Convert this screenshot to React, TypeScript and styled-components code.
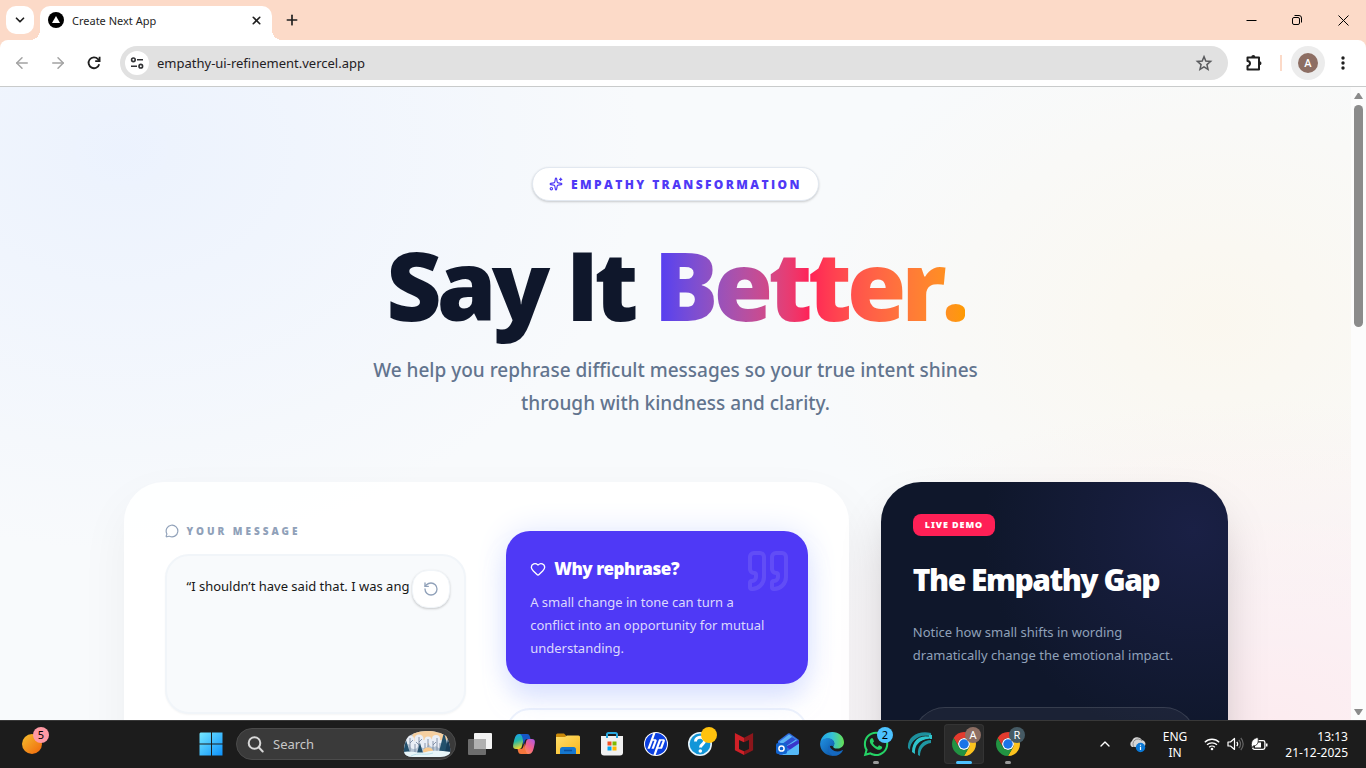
import React from "react";
import styled, { createGlobalStyle } from "styled-components";
import {
  ArrowLeft,
  ArrowRight,
  ChevronDown,
  ChevronUp,
  Heart,
  MessageCircle,
  Plus,
  Quote,
  RotateCcw,
  Sparkles,
  X,
} from "lucide-react";
import { FaWhatsapp } from "react-icons/fa";
import { SiHp } from "react-icons/si";

const indigo = "#4f39f6";
const slate = "#0f172b";
const rose = "#ff2056";
const display = `"Open Sans", "Noto Sans", sans-serif`;

const GlobalStyle = createGlobalStyle`
  *, *::before, *::after { box-sizing: border-box; }
  body { margin: 0; overflow: hidden; }
  body, button, input, textarea { font-family: "Noto Sans", "Open Sans", sans-serif; }
  button { border: 0; padding: 0; background: none; color: inherit; cursor: pointer; }
  h1, h2, h3, p { margin: 0; }
  svg { display: block; flex: none; }
`;

const Screen = styled.div`
  display: flex;
  flex-direction: column;
  height: 100vh;
  background: #fcdac8;
`;

/* ---------- browser window ---------- */

const TitleBar = styled.header`
  display: flex;
  align-items: flex-end;
  flex: none;
  height: 40px;
  padding-left: 6px;
  color: #1f1f1f;
`;

const TabSearch = styled.button`
  display: grid;
  place-items: center;
  align-self: center;
  width: 28px;
  height: 28px;
  border-radius: 10px;
  background: #fff;
`;

const Tab = styled.div`
  display: flex;
  align-items: center;
  gap: 8px;
  position: relative;
  width: 232px;
  height: 34px;
  margin-left: 6px;
  padding: 0 8px 6px;
  border-radius: 10px 10px 0 0;
  background: #fff;
  font-size: 11px;
  &::before, &::after {
    content: "";
    position: absolute;
    bottom: 0;
    width: 10px;
    height: 10px;
  }
  &::before {
    right: 100%;
    background: radial-gradient(circle at 0 0, transparent 10px, #fff 10px);
  }
  &::after {
    left: 100%;
    background: radial-gradient(circle at 100% 0, transparent 10px, #fff 10px);
  }
`;

const TabTitle = styled.span`
  flex: 1;
  white-space: nowrap;
`;

const IconButton = styled.button<{ $w?: number; $h?: number; $dim?: boolean }>`
  display: grid;
  place-items: center;
  flex: none;
  width: ${(p) => p.$w ?? 28}px;
  height: ${(p) => p.$h ?? 28}px;
  color: ${(p) => (p.$dim ? "#a3a3a3" : "#1f1f1f")};
`;

const NewTab = styled(IconButton)`
  align-self: center;
  margin-left: 6px;
`;

const WindowControls = styled.div`
  display: flex;
  height: 40px;
  margin-left: auto;
`;

const Toolbar = styled.div`
  display: flex;
  align-items: center;
  flex: none;
  height: 47px;
  padding: 0 5px 0 8px;
  border-bottom: 1px solid #c9cbcb;
  border-radius: 8px 8px 0 0;
  background: #fff;
`;

const NavButtons = styled.div`
  display: flex;
  gap: 8px;
  margin-right: 12px;
`;

const AddressBar = styled.label`
  display: flex;
  align-items: center;
  flex: 1;
  min-width: 0;
  height: 34px;
  padding: 0 10px 0 5px;
  border-radius: 17px;
  background: #e1e1e1;
`;

const SiteInfo = styled.span`
  display: grid;
  place-items: center;
  width: 24px;
  height: 24px;
  border-radius: 50%;
  background: #fff;
`;

const AddressInput = styled.input`
  flex: 1;
  min-width: 0;
  padding: 0 8px;
  border: 0;
  outline: 0;
  background: none;
  color: #1f2024;
  font-size: 13px;
`;

const ToolbarDivider = styled.span`
  width: 2px;
  height: 16px;
  margin-right: 9px;
  background: #fcdac8;
`;

const Profile = styled.button`
  display: grid;
  place-items: center;
  width: 34px;
  height: 34px;
  border-radius: 50%;
  background: #ececec;
`;

const Avatar = styled.span`
  display: grid;
  place-items: center;
  width: 20px;
  height: 20px;
  border-radius: 50%;
  background: #8d6e63;
  color: #fff;
  font: 500 11px Roboto, sans-serif;
`;

/* ---------- page ---------- */

const Viewport = styled.div`
  display: flex;
  flex: 1;
  min-height: 0;
  overflow: hidden;
`;

const Page = styled.main`
  flex: 1;
  min-width: 0;
  overflow: hidden;
  padding: 80px 24px 0;
  background:
    radial-gradient(ellipse 520px 400px at 9% 10%, rgba(226, 236, 255, 0.55), rgba(226, 236, 255, 0) 100%),
    radial-gradient(ellipse 560px 320px at 94% 100%, rgba(255, 228, 233, 0.65), rgba(255, 228, 233, 0) 100%),
    radial-gradient(ellipse 420px 320px at 90% 37%, rgba(252, 246, 232, 0.65), rgba(252, 246, 232, 0) 100%),
    #f8fafc;
`;

const ScrollBar = styled.div`
  display: flex;
  flex-direction: column;
  align-items: center;
  justify-content: space-between;
  flex: none;
  width: 15px;
  padding: 5px 0 4px;
  background: #fcfcfc;
  color: #8b8b8b;
`;

const ScrollThumb = styled.span`
  width: 9px;
  height: 222px;
  margin: 5px 0 auto;
  border-radius: 5px;
  background: #8b8b8b;
`;

const Container = styled.div`
  max-width: 1104px;
  margin: 0 auto;
`;

const Hero = styled.section`
  display: flex;
  flex-direction: column;
  align-items: center;
  margin-bottom: 62px;
  text-align: center;
`;

const Pill = styled.div`
  display: flex;
  align-items: center;
  gap: 8px;
  height: 34px;
  padding: 0 16px;
  border: 1px solid #e2e8f0;
  border-radius: 18px;
  background: #fff;
  box-shadow: 0 1px 3px rgba(0, 0, 0, 0.1), 0 1px 2px rgba(0, 0, 0, 0.1);
  color: ${indigo};
  font-family: ${display};
  font-size: 12px;
  font-weight: 800;
  letter-spacing: 0.2em;
  white-space: nowrap;
`;

const Headline = styled.h1`
  margin: 35px 0 22px;
  color: ${slate};
  font-family: ${display};
  font-size: 96px;
  font-weight: 800;
  line-height: 96px;
  letter-spacing: -0.05em;
  white-space: nowrap;
`;

const Gradient = styled.span`
  display: inline-block;
  background: linear-gradient(to right in oklab, ${indigo}, ${rose}, #fe9a00);
  background-clip: text;
  -webkit-background-clip: text;
  color: transparent;
`;

const Lead = styled.p`
  max-width: 640px;
  color: #62748e;
  font-size: 19px;
  font-weight: 500;
  line-height: 33px;
`;

const Columns = styled.div`
  display: grid;
  grid-template-columns: repeat(12, minmax(0, 1fr));
  gap: 32px;
  align-items: start;
`;

const Composer = styled.section`
  display: grid;
  grid-template-columns: 1fr 1fr;
  gap: 40px;
  grid-column: span 8;
  min-height: 480px;
  padding: 41px;
  border-radius: 40px;
  background: rgba(255, 255, 255, 0.88);
  box-shadow: 0 20px 50px rgba(0, 0, 0, 0.05);
`;

const FieldLabel = styled.label`
  display: flex;
  align-items: center;
  gap: 8px;
  height: 16px;
  margin-bottom: 15px;
  color: #90a1b9;
  font-size: 10px;
  font-weight: 900;
  letter-spacing: 0.3em;
  white-space: nowrap;
`;

const MessageBox = styled.div`
  position: relative;
  display: flex;
`;

const Message = styled.textarea`
  width: 100%;
  height: 160px;
  padding: 20px;
  border: 2px solid #f1f5f9;
  border-radius: 24px;
  outline: 0;
  background: #f8fafc;
  box-shadow: 0 1px 2px rgba(0, 0, 0, 0.04);
  color: #171717;
  font-size: 13px;
  line-height: 20px;
  resize: none;
`;

const ResetButton = styled.button`
  position: absolute;
  top: 16px;
  right: 16px;
  display: grid;
  place-items: center;
  width: 38px;
  height: 38px;
  border: 1px solid #f1f5f9;
  border-radius: 16px;
  background: #fff;
  box-shadow: 0 1px 3px rgba(0, 0, 0, 0.1), 0 1px 2px rgba(0, 0, 0, 0.1);
  color: #90a1b9;
`;

const SideNotes = styled.div`
  display: flex;
  flex-direction: column;
  gap: 24px;
  padding-top: 8px;
`;

const WhyCard = styled.article`
  position: relative;
  padding: 24px;
  border-radius: 24px;
  background: ${indigo};
  box-shadow: 0 20px 25px -5px #c6d2ff80, 0 0 32px #e0e7ff;
  color: #fff;
`;

const WhyTitle = styled.h3`
  display: flex;
  align-items: center;
  gap: 8px;
  margin-bottom: 8px;
  font-size: 17px;
  font-weight: 900;
  line-height: 28px;
  letter-spacing: -0.025em;
`;

const WhyText = styled.p`
  max-width: 244px;
  color: #dcd8fd;
  font-size: 13px;
  line-height: 23px;
`;

const QuoteMark = styled(Quote)`
  position: absolute;
  top: 16px;
  right: 16px;
  opacity: 0.1;
`;

const ExampleCard = styled.div`
  height: 160px;
  border: 2px solid #edf2fc;
  border-radius: 24px;
  background: rgba(255, 255, 255, 0.5);
`;

const GapCard = styled.aside`
  grid-column: span 4;
  min-height: 480px;
  padding: 32px;
  border-radius: 40px;
  background: radial-gradient(circle 210px at 90% 48px, #1a2045, ${slate}) ${slate};
  box-shadow: 0 25px 50px -12px rgba(0, 0, 0, 0.25);
  color: #fff;
`;

const LiveBadge = styled.span`
  display: inline-block;
  padding: 0 12px;
  border-radius: 8px;
  background: ${rose};
  font-size: 9px;
  font-weight: 900;
  line-height: 22px;
  letter-spacing: 0.1em;
  vertical-align: top;
`;

const GapTitle = styled.h2`
  margin: 24px 0 21px;
  font-size: 30px;
  font-weight: 900;
  line-height: 40px;
  letter-spacing: -0.05em;
  white-space: nowrap;
`;

const GapText = styled.p`
  margin-bottom: 40px;
  color: #90a1b9;
  font-size: 13px;
  line-height: 23px;
`;

const GapExample = styled.div`
  height: 160px;
  border: 1px solid rgba(255, 255, 255, 0.12);
  border-radius: 32px;
  background: rgba(255, 255, 255, 0.05);
`;

/* ---------- taskbar ---------- */

const TaskBar = styled.footer`
  display: flex;
  align-items: center;
  flex: none;
  height: 48px;
  background: #1c1c1c;
  box-shadow: inset 0 1px #383838;
  color: #fff;
`;

const WidgetArea = styled.div`
  flex: 0 0 189px;
  padding-left: 10px;
`;

const AppButton = styled.button<{ $active?: boolean; $running?: boolean }>`
  position: relative;
  display: grid;
  place-items: center;
  flex: none;
  width: 40px;
  height: 40px;
  margin: 0 2px;
  border-radius: 4px;
  background: ${(p) => (p.$active ? "#2a2a2a" : "transparent")};
  box-shadow: ${(p) => (p.$active ? "inset 0 0 0 1px #343434" : "none")};
  &::after {
    content: "";
    display: ${(p) => (p.$active || p.$running ? "block" : "none")};
    position: absolute;
    bottom: 0;
    width: ${(p) => (p.$active ? 16 : 6)}px;
    height: 3px;
    border-radius: 2px;
    background: ${(p) => (p.$active ? "#4cc2ff" : "#9a9a9a")};
  }
`;

const Badge = styled.span<{ $bg: string; $fg?: string }>`
  position: absolute;
  top: 3px;
  right: 3px;
  display: grid;
  place-items: center;
  width: 16px;
  height: 16px;
  border-radius: 50%;
  background: ${(p) => p.$bg};
  color: ${(p) => p.$fg ?? "#fff"};
  font-size: 11px;
  line-height: 16px;
`;

const SearchBox = styled.label`
  display: flex;
  align-items: center;
  gap: 9px;
  flex: none;
  width: 220px;
  height: 32px;
  margin: 0 2px 0 3px;
  padding: 0 4px 0 10px;
  border: 1px solid #4b4b4b;
  border-radius: 16px;
  background: #3a3a3a;
`;

const SearchInput = styled.input`
  flex: 1;
  min-width: 0;
  padding: 0;
  border: 0;
  outline: 0;
  background: none;
  color: #fff;
  font-size: 13px;
  &::placeholder { color: #c8c8c8; opacity: 1; }
`;

const Tray = styled.div`
  display: flex;
  align-items: center;
  margin-left: auto;
  padding-right: 18px;
  font-size: 12px;
  line-height: 16px;
`;

const TrayIcons = styled.div`
  display: flex;
  align-items: center;
  gap: 7px;
  margin: 0 17px 0 17px;
`;

const TrayApps = styled.div`
  display: flex;
  align-items: center;
  gap: 15px;
  margin-right: 17px;
`;

const TrayText = styled.div<{ $align: "center" | "right" }>`
  padding-top: 1px;
  text-align: ${(p) => p.$align};
  white-space: nowrap;
`;

/* ---------- drawings ---------- */

const ReloadIcon = () => (
  <svg width="16" height="16" viewBox="0 0 16 16" fill="none" stroke="currentColor" strokeWidth="1.8">
    <path d="M13.2 9.2A5.4 5.4 0 1 1 12 4.2l1.4 1.5" />
    <path d="M13.6 1.8v4.4H9.2" />
  </svg>
);

const TuneIcon = () => (
  <svg width="14" height="14" viewBox="0 0 14 14" fill="none" stroke="#303134" strokeWidth="1.6">
    <circle cx="3.4" cy="3.8" r="1.8" />
    <path d="M7 3.8h6M1 10.2h6" />
    <circle cx="10.8" cy="10.2" r="1.8" />
  </svg>
);

const StarIcon = () => (
  <svg width="18" height="18" viewBox="0 0 24 24" fill="none" stroke="#5a5b5e" strokeWidth="2">
    <path d="M12 3.5l2.4 5.900 6.400.5-4.900 4.200 1.500 6.300-5.400-3.300-5.400 3.300 1.500-6.300-4.900-4.200 6.400-.5z" />
  </svg>
);

const ExtensionIcon = () => (
  <svg width="20" height="20" viewBox="0 0 20 20">
    <path
      d="M3.500 8V4.500h11.500v12H3.500V13a2.500 2.500 0 0 0 0-5z"
      fill="none"
      stroke="#1f1f1f"
      strokeWidth="2"
      strokeLinejoin="round"
    />
    <path d="M7.300 4a2 2 0 0 1 4 0zM15.500 8.300a2 2 0 0 1 0 4z" fill="#1f1f1f" />
  </svg>
);

const MoreIcon = () => (
  <svg width="16" height="16" fill="#1f1f1f">
    <circle cx="8" cy="3" r="1.700" />
    <circle cx="8" cy="8" r="1.700" />
    <circle cx="8" cy="13" r="1.700" />
  </svg>
);

const FaviconIcon = () => (
  <svg width="16" height="16">
    <circle cx="8" cy="8" r="8" />
    <path d="M8 4l4 7H4z" fill="#fff" />
  </svg>
);

const RestoreIcon = () => (
  <svg width="12" height="12" fill="none" stroke="#000">
    <rect x="1.500" y="3.500" width="7" height="7" rx="1.500" />
    <path d="M3.500 1.500h4.500a2.500 2.500 0 0 1 2.500 2.500v4.500" />
  </svg>
);

const MinimizeIcon = () => (
  <svg width="11" height="11" stroke="#000">
    <path d="M.5 5.500h10" />
  </svg>
);

const CloseIcon = () => (
  <svg width="11" height="11" stroke="#000">
    <path d="M.5.5l10 10M10.500.5l-10 10" />
  </svg>
);

const ScrollArrow = ({ down }: { down?: boolean }) => (
  <svg width="9" height="8" viewBox="0 0 9 8">
    <path d={down ? "M0 1h9L5.200 7H3.800z" : "M0 7h9L5.200 1H3.800z"} fill="currentColor" />
  </svg>
);

const WeatherIcon = () => (
  <svg width="24" height="24">
    <defs>
      <linearGradient id="sun" x1="0" y1="0" x2="1" y2="1">
        <stop offset="0" stopColor="#f5c02e" />
        <stop offset="1" stopColor="#f0640b" />
      </linearGradient>
    </defs>
    <circle cx="12" cy="12" r="10" fill="url(#sun)" />
  </svg>
);

const StartIcon = () => (
  <svg width="24" height="24" fill="url(#win)">
    <defs>
      <linearGradient id="win" gradientUnits="userSpaceOnUse" x1="0" y1="0" x2="24" y2="24">
        <stop offset="0" stopColor="#78eaff" />
        <stop offset="1" stopColor="#0a8ffb" />
      </linearGradient>
    </defs>
    <path d="M1.500.5H12v11H.5v-10zM13 .5h10.500v11H13zM.5 12.500H12v11H.5zM13 12.500h10.500v11H13z" />
  </svg>
);

const SearchIcon = () => (
  <svg width="17" height="17" fill="none" stroke="#d8d8d8" strokeWidth="2">
    <circle cx="7.500" cy="7" r="5.800" />
    <path d="M11.700 11.300l4 4.200" strokeLinecap="round" />
  </svg>
);

const WinterScene = () => (
  <svg width="48" height="26" viewBox="0 0 48 26">
    <defs>
      <clipPath id="scene">
        <path d="M6 5C12 1 19 0 25 0s14 2 18 5c3 4 5 12 4 17-2 3-7 4-12 4H10c-6 0-10-3-9-8 0-5 2-10 5-13z" />
      </clipPath>
    </defs>
    <g clipPath="url(#scene)">
      <rect width="48" height="26" fill="#b4c3d2" />
      <ellipse cx="27" cy="6" rx="18" ry="8" fill="#f5cfa0" />
      <g fill="#e9eef6">
        <circle cx="7" cy="9" r="4.500" />
        <circle cx="11" cy="14" r="4" />
        <circle cx="16" cy="8" r="4.500" />
        <circle cx="21" cy="13" r="4" />
        <circle cx="25" cy="9" r="3.500" />
        <circle cx="30" cy="12" r="4" />
        <circle cx="33" cy="8" r="4" />
        <circle cx="37" cy="13" r="4" />
      </g>
      <path
        d="M7 7v15M7 12l3-3M12 13v9M16 6v16M16 11l3-3M16 14l-3-3M22 12v10M25 8v8M30 10v12M30 14l3-3M34 7v14M37 12v9"
        stroke="#6f7f99"
        strokeWidth=".8"
      />
      <ellipse cx="25" cy="20" rx="5" ry="3.500" fill="#f9c98c" />
      <path d="M3 9l4 13H0zM41 1l5 20H36zM17 12l3 10h-6z" fill="#23506c" />
      <path d="M45 8l4 13h-7z" fill="#193d59" />
      <path d="M0 21c8-2 15 2 23 0s15-1 25 0v6H0z" fill="#e8f5f8" />
      <path d="M8 25c8-4 13 0 22-3" stroke="#b9dfe8" fill="none" />
    </g>
  </svg>
);

const TaskViewIcon = () => (
  <svg width="24" height="24">
    <rect x="6" y="1" width="18" height="16" rx="1" fill="#f3f3f3" />
    <rect x="0" y="7" width="18" height="16" rx="1" fill="#6d6d6d" />
    <rect x="6" y="7" width="12" height="10" fill="#b0b0b0" />
  </svg>
);

const CopilotIcon = () => (
  <svg width="24" height="24" viewBox="0 0 24 24">
    <defs>
      <linearGradient id="cpA" x1="0" y1="0" x2="0.300" y2="1">
        <stop offset="0" stopColor="#1c9cf5" />
        <stop offset=".5" stopColor="#22b8a6" />
        <stop offset="1" stopColor="#e8d532" />
      </linearGradient>
      <linearGradient id="cpB" x1="1" y1="0" x2="0.200" y2="1">
        <stop offset="0" stopColor="#a659ea" />
        <stop offset=".5" stopColor="#f2608e" />
        <stop offset="1" stopColor="#ff9a4d" />
      </linearGradient>
    </defs>
    <path d="M14 2H7C4 2 3 5 2 9c-1 4-2 8 2 8h3c2 0 2.500-1 3-3l2-8c.5-2 1-4 2-4z" fill="url(#cpA)" />
    <path d="M8 2h7c2 0 2.500 1 3 3l.5 2h-3c-2 0-2.500 1-3 3l-1 3C11 6 10 3 8 2z" fill="#1657c6" />
    <path d="M10 22h7c3 0 4-3 5-7s2-8-2-8h-3c-2 0-2.500 1-3 3l-2 8c-.5 2-1 4-2 4z" fill="url(#cpB)" />
    <path d="M16 22H9c-2 0-2.500-1-3-3l-.5-2h3c2 0 2.500-1 3-3l1-3c.5 7 1.500 10 3.500 11z" fill="#f5763c" />
  </svg>
);

const FolderIcon = () => (
  <svg width="24" height="24">
    <path d="M0 3a1.500 1.500 0 0 1 1.500-1.500H8l2.500 2.500V8H0z" fill="#c98808" />
    <path d="M0 5h9l2-1.500h11.500A1.500 1.500 0 0 1 24 5v17H0z" fill="url(#folder)" />
    <defs>
      <linearGradient id="folder" x1="0" y1="0" x2="1" y2="1">
        <stop offset="0" stopColor="#ffdf6c" />
        <stop offset="1" stopColor="#f9b71c" />
      </linearGradient>
    </defs>
    <path d="M4 22v-4.500A2.500 2.500 0 0 1 6.500 15h11a2.500 2.500 0 0 1 2.500 2.500V22z" fill="#1577cf" />
    <path d="M8 18.500h8" stroke="#0a4f9e" strokeWidth="1.500" />
  </svg>
);

const StoreIcon = () => (
  <svg width="24" height="24">
    <path d="M7 6V2.500A1.500 1.500 0 0 1 8.500 1h7A1.500 1.500 0 0 1 17 2.500V6" fill="none" stroke="#28a8e0" strokeWidth="2" />
    <path d="M1 4h22v16.500a3 3 0 0 1-3 3H4a3 3 0 0 1-3-3z" fill="#f1f1f1" />
    <path d="M7 2v4M17 2v4" stroke="#28a8e0" strokeWidth="2" />
    <path d="M7.500 9.500h4v4h-4z" fill="#f25022" />
    <path d="M12.500 9.500h4v4h-4z" fill="#7fba00" />
    <path d="M7.500 14.500h4v4h-4z" fill="#00a4ef" />
    <path d="M12.500 14.500h4v4h-4z" fill="#ffb900" />
  </svg>
);

const HpDisc = styled.span`
  display: grid;
  place-items: center;
  width: 24px;
  height: 24px;
  border-radius: 50%;
  background: #fff;
  color: #0b3fe0;
`;

const HelpIcon = () => (
  <svg width="24" height="24" fill="none">
    <circle cx="12" cy="12" r="11.200" fill="#1296d8" stroke="#e8f5fc" strokeWidth="1.600" />
    <path d="M7.500 9.500c0-5.500 9-5.500 9-.5 0 3.500-4 3-4 6.500" stroke="#fff" strokeWidth="3" />
    <circle cx="12.300" cy="19" r="1.800" fill="#fff" />
  </svg>
);

const McAfeeIcon = () => (
  <svg width="20" height="24" viewBox="0 0 22 26">
    <path d="M1 1l10 5v5L5.500 8.500v10L11 21v4L1 20z" fill="#cf2027" />
    <path d="M21 1L11 6v5l5.500-2.500v10L11 21v4l10-5z" fill="#8c161b" />
  </svg>
);

const OutlookIcon = () => (
  <svg width="24" height="24">
    <path d="M2 9L12 1.500a2 2 0 0 1 2 0L23 8v13a2 2 0 0 1-2 2H5a3 3 0 0 1-3-3z" fill="#2f6be0" />
    <path d="M3 10l10-7.500L21 8l-9 7z" fill="#5cb4f5" />
    <path d="M6 12l10-7 4 2.500-9 6z" fill="#2b50cf" />
    <path d="M10 14.500L23 8v5l-8 5z" fill="#3a35c9" />
    <path d="M23 11.500V21a2 2 0 0 1-2 2H6z" fill="#55b9f7" />
    <rect x="0" y="11" width="11" height="11" rx="2" fill="#1163cf" />
    <circle cx="5.500" cy="16.500" r="2.600" fill="none" stroke="#fff" strokeWidth="1.500" />
  </svg>
);

const EdgeIcon = () => (
  <svg width="24" height="24" viewBox="0 0 24 24">
    <defs>
      <linearGradient id="edgeTop" x1="0" y1=".4" x2="1" y2=".4">
        <stop offset="0" stopColor="#1fa2e8" />
        <stop offset=".5" stopColor="#35c1d8" />
        <stop offset="1" stopColor="#66e152" />
      </linearGradient>
      <linearGradient id="edgeLow" x1="0" y1="0" x2="1" y2="1">
        <stop offset="0" stopColor="#2091e2" />
        <stop offset="1" stopColor="#0c4f9f" />
      </linearGradient>
    </defs>
    <path d="M.2 11C1 4.500 6 0 12.300 0 19 0 24 4.800 24 10.200c0 4-3.200 6.300-6.700 6.300-3 0-4.300-1.200-4.100-2.100.2-.7 1-1.200 1-2.900 0-2.500-2.600-4.700-6-4.700-4 0-7.200 2-8 4.200z" fill="url(#edgeTop)" />
    <path d="M.1 11.500C.6 8 4.500 6.200 8.200 6.200c4 0 6.200 2.800 6.200 5.200 0 1.600-1 2-1.100 3-3-2-5 .6-4.500 3.400.6 3.400 4 6 7.200 6-2 .4-9 .6-13-4.300C.8 17 0 14 .1 11.500z" fill="url(#edgeLow)" />
    <path d="M9.500 12.500c-3 3.500-1.600 10 4.400 11.300 4.500.6 7.600-2.800 8.800-5 .3-.6-.2-.9-.7-.6-5.500 3-12 .2-12.500-5.700z" fill="#1568bf" />
  </svg>
);

const WaveIcon = () => (
  <svg width="26" height="26" viewBox="0 0 26 26">
    <path d="M24 2C11-1 0 6 1 17l2 2C3 10 11 4 24 6z" fill="#1d8f9c" />
    <path d="M25 4C14 2 5 9 5 21l3 2C7 14 13 7 25 8z" fill="#2fc4cc" />
    <path d="M24 9c-8 0-14 6-13 15l2 1c0-7 4-12 11-13z" fill="#1f97a3" />
    <path d="M22 5C12 4 5 9 4 19M23 8C14 9 9 14 10 23" fill="none" stroke="#1c1c1c" strokeWidth=".9" />
  </svg>
);

const ChromeIcon = () => (
  <svg width="24" height="24" viewBox="0 0 48 48">
    <circle cx="24" cy="24" r="12" fill="#fff" />
    <path d="M24 12h20.780a24 24 0 0 0-41.560 0L13.610 30A12 12 0 0 1 24 12z" fill="#e33b2e" />
    <path d="M34.390 30L24 48A24 24 0 0 0 44.780 12H24a12 12 0 0 1 10.390 18z" fill="#fcc31e" />
    <path d="M13.610 30L3.220 12A24 24 0 0 0 24 48l10.390-18a12 12 0 0 1-20.780 0z" fill="#229342" />
    <circle cx="24" cy="24" r="9.500" fill="#1a73e8" />
  </svg>
);

const CloudIcon = () => (
  <svg width="18" height="18">
    <path d="M4 12a3.500 3.500 0 0 1 0-6 5.500 5.500 0 0 1 10-1 4 4 0 0 1 2 7z" fill="#d6d6d6" />
    <path d="M6 12a5 5 0 0 1 8-6" stroke="#8a8a8a" fill="none" />
    <circle cx="12.500" cy="12.500" r="4.700" fill="#0a78d6" />
    <path d="M12.500 11.800v3.200M12.500 9.800v1" stroke="#fff" strokeWidth="1.200" />
  </svg>
);

const WifiIcon = () => (
  <svg width="16" height="14" fill="none" stroke="#fff" strokeWidth="1.300">
    <path d="M.8 5.200a10.300 10.300 0 0 1 14.400 0M3 7.800a7.200 7.200 0 0 1 10 0M5.200 10.200a4 4 0 0 1 5.600 0" />
    <circle cx="8" cy="12" r="1.300" fill="#fff" stroke="none" />
  </svg>
);

const VolumeIcon = () => (
  <svg width="17" height="14" fill="none" stroke="#fff" strokeWidth="1.200">
    <path d="M1 5h2.500L7.500 1.500v11L3.500 9H1z" strokeLinejoin="round" />
    <path d="M9.800 4.800a3.500 3.500 0 0 1 0 4.400" />
    <path d="M11.800 2.800a6 6 0 0 1 0 8.400M13.800 1a8.800 8.800 0 0 1 0 12" stroke="#666" />
  </svg>
);

const BatteryIcon = () => (
  <svg width="17" height="14">
    <rect x="1.600" y="3.600" width="12.300" height="8.800" rx="1.800" fill="none" stroke="#fff" strokeWidth="1.300" />
    <path d="M15 6.500h1.500v3H15z" fill="#fff" />
    <rect x="4" y="5.500" width="6" height="5" fill="#fff" />
    <path d="M.5 9.500C-.5 4 3 1 7 .5 8 6 6 9 2 9l-1 2z" fill="#fff" stroke="#1c1c1c" strokeWidth=".8" />
  </svg>
);

const ChromeWindow = () => (
  <>
    <TitleBar>
      <TabSearch aria-label="Search tabs">
        <ChevronDown size={14} strokeWidth={3} />
      </TabSearch>
      <Tab>
        <FaviconIcon />
        <TabTitle>Create Next App</TabTitle>
        <IconButton $w={16} $h={16} aria-label="Close tab">
          <X size={13} strokeWidth={3} />
        </IconButton>
      </Tab>
      <NewTab aria-label="New tab">
        <Plus size={16} strokeWidth={2.5} />
      </NewTab>
      <WindowControls>
        <IconButton $w={46} $h={40} aria-label="Minimize">
          <MinimizeIcon />
        </IconButton>
        <IconButton $w={46} $h={40} aria-label="Restore">
          <RestoreIcon />
        </IconButton>
        <IconButton $w={46} $h={40} aria-label="Close">
          <CloseIcon />
        </IconButton>
      </WindowControls>
    </TitleBar>
    <Toolbar>
      <NavButtons>
        <IconButton $dim aria-label="Back">
          <ArrowLeft size={18} />
        </IconButton>
        <IconButton $dim aria-label="Forward">
          <ArrowRight size={18} />
        </IconButton>
        <IconButton aria-label="Reload">
          <ReloadIcon />
        </IconButton>
      </NavButtons>
      <AddressBar>
        <SiteInfo>
          <TuneIcon />
        </SiteInfo>
        <AddressInput aria-label="Address" defaultValue="empathy-ui-refinement.vercel.app" />
        <IconButton aria-label="Bookmark">
          <StarIcon />
        </IconButton>
      </AddressBar>
      <IconButton $w={52} aria-label="Extensions">
        <ExtensionIcon />
      </IconButton>
      <ToolbarDivider />
      <Profile aria-label="Profile">
        <Avatar>A</Avatar>
      </Profile>
      <IconButton $w={36} aria-label="Menu">
        <MoreIcon />
      </IconButton>
    </Toolbar>
  </>
);

const Landing = () => (
  <Viewport>
    <Page>
      <Container>
        <Hero>
          <Pill>
            <Sparkles size={14} />
            EMPATHY TRANSFORMATION
          </Pill>
          <Headline>
            Say It <Gradient>Better.</Gradient>
          </Headline>
          <Lead>
            We help you rephrase difficult messages so your true intent shines through with kindness
            and clarity.
          </Lead>
        </Hero>
        <Columns>
          <Composer>
            <div>
              <FieldLabel htmlFor="message">
                <MessageCircle size={14} />
                YOUR MESSAGE
              </FieldLabel>
              <MessageBox>
                <Message id="message" defaultValue="“I shouldn’t have said that. I was ang" />
                <ResetButton aria-label="Reset message">
                  <RotateCcw size={16} />
                </ResetButton>
              </MessageBox>
            </div>
            <SideNotes>
              <WhyCard>
                <QuoteMark size={48} />
                <WhyTitle>
                  <Heart size={16} />
                  Why rephrase?
                </WhyTitle>
                <WhyText>
                  A small change in tone can turn a conflict into an opportunity for mutual
                  understanding.
                </WhyText>
              </WhyCard>
              <ExampleCard />
            </SideNotes>
          </Composer>
          <GapCard>
            <LiveBadge>LIVE DEMO</LiveBadge>
            <GapTitle>The Empathy Gap</GapTitle>
            <GapText>
              Notice how small shifts in wording dramatically change the emotional impact.
            </GapText>
            <GapExample />
          </GapCard>
        </Columns>
      </Container>
    </Page>
    <ScrollBar>
      <ScrollArrow />
      <ScrollThumb />
      <ScrollArrow down />
    </ScrollBar>
  </Viewport>
);

const Desktop = () => (
  <TaskBar>
    <WidgetArea>
      <AppButton aria-label="Widgets">
        <WeatherIcon />
        <Badge $bg="#ff99a4" $fg="#000">5</Badge>
      </AppButton>
    </WidgetArea>
    <AppButton aria-label="Start"><StartIcon /></AppButton>
    <SearchBox>
      <SearchIcon />
      <SearchInput aria-label="Search" placeholder="Search" />
      <WinterScene />
    </SearchBox>
    <AppButton aria-label="Task view"><TaskViewIcon /></AppButton>
    <AppButton aria-label="Copilot"><CopilotIcon /></AppButton>
    <AppButton aria-label="File Explorer"><FolderIcon /></AppButton>
    <AppButton aria-label="Store"><StoreIcon /></AppButton>
    <AppButton aria-label="HP"><HpDisc><SiHp size={22} /></HpDisc></AppButton>
    <AppButton aria-label="Help">
      <HelpIcon />
      <Badge $bg="#ffc20e" />
    </AppButton>
    <AppButton aria-label="McAfee"><McAfeeIcon /></AppButton>
    <AppButton aria-label="Outlook"><OutlookIcon /></AppButton>
    <AppButton aria-label="Edge"><EdgeIcon /></AppButton>
    <AppButton $running aria-label="WhatsApp">
      <FaWhatsapp size={28} color="#25d366" />
      <Badge $bg="#4cc2ff" $fg="#000">2</Badge>
    </AppButton>
    <AppButton aria-label="Wave"><WaveIcon /></AppButton>
    <AppButton $active aria-label="Chrome">
      <ChromeIcon />
      <Badge $bg="#8d6e63">A</Badge>
    </AppButton>
    <AppButton $running aria-label="Chrome, second profile">
      <ChromeIcon />
      <Badge $bg="#455a64">R</Badge>
    </AppButton>
    <Tray>
      <TrayApps>
        <ChevronUp size={16} strokeWidth={2} />
        <CloudIcon />
      </TrayApps>
      <TrayText $align="center">
        ENG
        <br />
        IN
      </TrayText>
      <TrayIcons>
        <WifiIcon />
        <VolumeIcon />
        <BatteryIcon />
      </TrayIcons>
      <TrayText $align="right">
        13:13
        <br />
        21-12-2025
      </TrayText>
    </Tray>
  </TaskBar>
);

export default function App() {
  return (
    <Screen>
      <GlobalStyle />
      <ChromeWindow />
      <Landing />
      <Desktop />
    </Screen>
  );
}
